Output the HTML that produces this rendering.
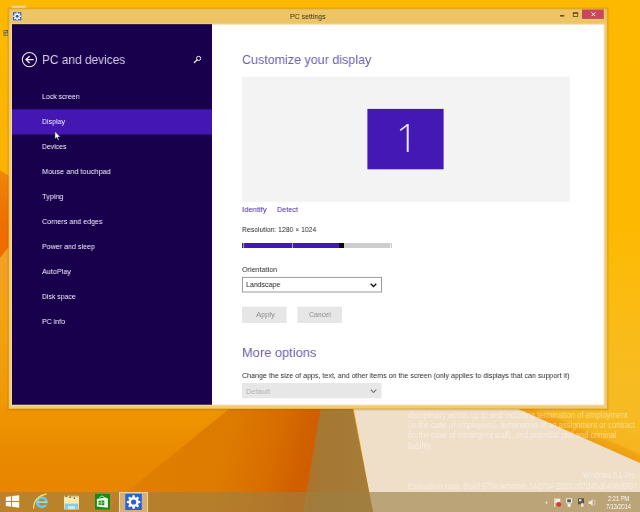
<!DOCTYPE html>
<html>
<head>
<meta charset="utf-8">
<title>PC settings</title>
<style>
html,body{margin:0;padding:0;}
body{width:640px;height:512px;overflow:hidden;position:relative;background:#FDB900;font-family:"Liberation Sans",sans-serif;}
.abs{position:absolute;}
.tx{position:absolute;white-space:nowrap;transform-origin:0 50%;will-change:transform;}
#wall{position:absolute;left:0;top:0;width:640px;height:512px;}
#ui{position:absolute;left:0;top:0;width:640px;height:512px;}
</style>
</head>
<body>
<svg id="wall" viewBox="0 0 640 512">
  <defs>
    <linearGradient id="gbase" x1="0" y1="0" x2="0" y2="1">
      <stop offset="0" stop-color="#FDB900"/>
      <stop offset="0.55" stop-color="#F9AE00"/>
      <stop offset="0.8" stop-color="#F29C04"/>
      <stop offset="1" stop-color="#EE9406"/>
    </linearGradient>
    <linearGradient id="gul" gradientUnits="userSpaceOnUse" x1="0" y1="404" x2="0" y2="500">
      <stop offset="0" stop-color="#F09600"/>
      <stop offset="0.2" stop-color="#EE9200"/>
      <stop offset="0.5" stop-color="#E98A00"/>
      <stop offset="1" stop-color="#E98400"/>
    </linearGradient>
    <linearGradient id="gor" gradientUnits="userSpaceOnUse" x1="110" y1="395" x2="322" y2="445">
      <stop offset="0" stop-color="#E18200"/>
      <stop offset="0.58" stop-color="#DD7A00"/>
      <stop offset="0.8" stop-color="#D76C00"/>
      <stop offset="0.92" stop-color="#D06000"/>
      <stop offset="1" stop-color="#D05C00"/>
    </linearGradient>
    <linearGradient id="gband" gradientUnits="userSpaceOnUse" x1="308" y1="0" x2="368" y2="0">
      <stop offset="0" stop-color="#B07228"/>
      <stop offset="0.2" stop-color="#A57834"/>
      <stop offset="1" stop-color="#A67C38"/>
    </linearGradient>
    <linearGradient id="gyel" gradientUnits="userSpaceOnUse" x1="578" y1="436" x2="590" y2="408">
      <stop offset="0" stop-color="#EE9E12"/>
      <stop offset="0.22" stop-color="#F1A616"/>
      <stop offset="0.3" stop-color="#F5B520"/>
      <stop offset="1" stop-color="#F6BA22"/>
    </linearGradient>
    <linearGradient id="gleft" gradientUnits="userSpaceOnUse" x1="0" y1="245" x2="0" y2="412">
      <stop offset="0" stop-color="#F0A028"/>
      <stop offset="0.4" stop-color="#F2A314"/>
      <stop offset="1" stop-color="#EF9802"/>
    </linearGradient>
    <linearGradient id="gdark" gradientUnits="userSpaceOnUse" x1="0" y1="172" x2="0" y2="255">
      <stop offset="0" stop-color="#F08608"/>
      <stop offset="0.5" stop-color="#EE7202"/>
      <stop offset="1" stop-color="#F06A00"/>
    </linearGradient>
    <linearGradient id="gright" x1="0" y1="0" x2="0" y2="1">
      <stop offset="0" stop-color="#FDB900"/>
      <stop offset="0.45" stop-color="#FDB902"/>
      <stop offset="0.62" stop-color="#FABB14"/>
      <stop offset="0.75" stop-color="#F7BB22"/>
      <stop offset="1" stop-color="#F6BA22"/>
    </linearGradient>
  </defs>
  <rect x="0" y="0" width="640" height="512" fill="url(#gbase)"/>
  <rect x="600" y="0" width="40" height="512" fill="url(#gright)"/>
  <polygon points="0,170 12,178 12,243 0,258" fill="url(#gdark)"/>
  <polygon points="0,258 12,243 12,412 0,412" fill="url(#gleft)"/>
  <rect x="0" y="404" width="330" height="108" fill="url(#gul)"/>
  <polygon points="240,400 330,400 330,512 102,512" fill="url(#gor)"/>
  <polygon points="500,400 640,400 640,470" fill="url(#gyel)"/>
  <polygon points="352,400 498,400 640,463 640,512 373,512" fill="#EFDEC8"/>
  <polygon points="322,400 351,400 373,512 303,512" fill="url(#gband)"/>
</svg>

<!-- window chrome + content shapes -->
<svg id="ui" viewBox="0 0 640 512">
  <!-- thing peeking above window -->
  <rect x="11" y="5.6" width="15.5" height="3" rx="1" fill="#E9C66E"/>
  <rect x="12" y="6.6" width="13" height="0.9" fill="#F8EBC8"/>
  <!-- tiny desktop icon on left -->
  <rect x="3.6" y="30" width="4.4" height="5.6" fill="#5E4C18"/>
  <rect x="4.3" y="30.6" width="1.4" height="1.8" fill="#EADFA8"/>
  <rect x="6.2" y="31.2" width="1.2" height="1.3" fill="#CFC890"/>
  <rect x="4.4" y="33.4" width="1.2" height="1.4" fill="#F0E8C0"/>
  <rect x="6.2" y="33.2" width="1.3" height="1.8" fill="#E6DCA8"/>
  <!-- shadow -->
  <rect x="7" y="7" width="602" height="404" fill="rgba(150,90,0,0.10)"/>
  <rect x="8" y="8" width="600" height="402" fill="rgba(150,90,0,0.14)"/>
  <!-- frame -->
  <rect x="8.5" y="8.5" width="599" height="400.5" fill="#DDAE3A"/>
  <rect x="9.3" y="9.4" width="597.4" height="398.8" fill="#EEC566"/>
  <rect x="9.3" y="23.4" width="597.4" height="1.1" fill="#F3CF8E"/>
  <rect x="9.3" y="24.5" width="2.7" height="383.7" fill="#F1CD7C"/>
  <rect x="10.9" y="24.5" width="1.1" height="381" fill="#F4D592"/>
  <rect x="603.8" y="24.5" width="2.9" height="383.7" fill="#F1CD7C"/>
  <rect x="603.8" y="24.5" width="1.1" height="381" fill="#F4D592"/>
  <rect x="9.3" y="404.7" width="597.4" height="3.5" fill="#F0CB7A"/>
  <rect x="11" y="404.7" width="594" height="1.1" fill="#F5D898"/>
  <!-- title icon -->
  <rect x="13" y="12.2" width="8.3" height="8.1" fill="#2B5FC4"/>
  <polygon points="16.36,13.46 16.46,12.41 17.84,12.41 17.94,13.46 18.57,13.72 19.38,13.05 20.35,14.02 19.68,14.83 19.94,15.46 20.99,15.56 20.99,16.94 19.94,17.04 19.68,17.67 20.35,18.48 19.38,19.45 18.57,18.78 17.94,19.04 17.84,20.09 16.46,20.09 16.36,19.04 15.73,18.78 14.92,19.45 13.95,18.48 14.62,17.67 14.36,17.04 13.31,16.94 13.31,15.56 14.36,15.46 14.62,14.83 13.95,14.02 14.92,13.05 15.73,13.72" fill="#F4F6FC"/>
  <circle cx="17.15" cy="16.25" r="1.5" fill="#2B5FC4"/>
  <!-- min / max / close -->
  <rect x="560" y="15" width="4.2" height="1.6" fill="#6A5112"/>
  <rect x="573.3" y="12.9" width="4.4" height="3.6" fill="none" stroke="#6A5112" stroke-width="0.9"/>
  <rect x="572.9" y="12.3" width="5.2" height="1.4" fill="#6A5112"/>
  <rect x="582" y="9.5" width="21.8" height="9.4" fill="#C9475B"/>
  <path d="M591.6,12.5 L595.2,16.1 M595.2,12.5 L591.6,16.1" stroke="#fff" stroke-width="1" fill="none"/>
  <!-- panes -->
  <rect x="12" y="24.5" width="200" height="380.2" fill="#19004D"/>
  <rect x="212" y="24.5" width="391.8" height="380.2" fill="#FFFFFF"/>
  <rect x="12" y="24.4" width="200" height="0.8" fill="#12002C"/>
  <!-- selection -->
  <rect x="12" y="109.3" width="200" height="25.2" fill="#4417B3"/>
  <!-- back button -->
  <circle cx="29.4" cy="59.6" r="7.1" fill="none" stroke="#EDE8FA" stroke-width="1.05"/>
  <path d="M33.6,59.6 L26,59.6 M29.6,56.2 L26,59.6 L29.6,63" stroke="#F4F0FF" stroke-width="1.3" fill="none"/>
  <!-- search -->
  <circle cx="198.6" cy="58.4" r="2.1" fill="none" stroke="#EDE8FA" stroke-width="1"/>
  <path d="M197,60 L194.4,62.5" stroke="#EDE8FA" stroke-width="1.3" stroke-linecap="round" fill="none"/>
  <!-- preview box -->
  <rect x="242" y="76.6" width="327.8" height="125.2" fill="#F3F3F3"/>
  <rect x="367.4" y="108.9" width="76.2" height="60.4" fill="#4418B4"/>
  <path d="M400.2,130.3 L407.6,124.7" stroke="#EFE6FA" stroke-width="1.6" fill="none"/>
  <path d="M407.7,124 L407.7,151.9" stroke="#F1E8FB" stroke-width="2" fill="none"/>
  <!-- slider -->
  <rect x="242" y="243" width="150" height="5" fill="#CDCDCD"/>
  <rect x="242" y="243" width="97" height="5" fill="#4418B4"/>
  <rect x="339" y="243" width="5" height="5" fill="#0a0a0a"/>
  <rect x="243.3" y="243" width="0.8" height="5" fill="#E8E0FF" opacity="0.8"/>
  <rect x="292" y="243" width="0.8" height="5" fill="#E8E0FF" opacity="0.8"/>
  <rect x="390" y="243" width="0.8" height="5" fill="#fff" opacity="0.8"/>
  <!-- select -->
  <rect x="242.5" y="277.4" width="139" height="14.6" fill="#fff" stroke="#9a9a9a" stroke-width="1"/>
  <path d="M370.7,283.7 L373.5,286.5 L376.3,283.7" stroke="#111" stroke-width="1.3" fill="none"/>
  <!-- buttons -->
  <rect x="242" y="306.7" width="44.6" height="16.3" fill="#E6E6E6"/>
  <rect x="297.4" y="306.7" width="44.6" height="16.3" fill="#E6E6E6"/>
  <!-- disabled select -->
  <rect x="242" y="383" width="139.5" height="15.3" fill="#E7E7E7"/>
  <path d="M370.7,389.7 L373.5,392.5 L376.3,389.7" stroke="#7a7a7a" stroke-width="1.2" fill="none"/>
  <!-- cursor -->
  <path d="M54.9,131.2 L54.9,139 L56.7,137.4 L58,140.2 L59.1,139.7 L57.9,137 L60.3,136.9 Z" fill="#fff" stroke="#1a1030" stroke-width="0.5"/>
</svg>

<div class="tx" style="left:41.70px;top:91.83px;font-size:8.00px;line-height:10.40px;color:#F4F0FF;transform:scaleX(0.8694);">Lock screen</div>
<div class="tx" style="left:41.70px;top:116.83px;font-size:8.00px;line-height:10.40px;color:#F4F0FF;transform:scaleX(0.8768);">Display</div>
<div class="tx" style="left:41.70px;top:141.83px;font-size:8.00px;line-height:10.40px;color:#F4F0FF;transform:scaleX(0.8540);">Devices</div>
<div class="tx" style="left:41.70px;top:166.83px;font-size:8.00px;line-height:10.40px;color:#F4F0FF;transform:scaleX(0.9207);">Mouse and touchpad</div>
<div class="tx" style="left:41.70px;top:191.83px;font-size:8.00px;line-height:10.40px;color:#F4F0FF;transform:scaleX(0.9164);">Typing</div>
<div class="tx" style="left:41.70px;top:216.83px;font-size:8.00px;line-height:10.40px;color:#F4F0FF;transform:scaleX(0.8891);">Corners and edges</div>
<div class="tx" style="left:41.70px;top:241.83px;font-size:8.00px;line-height:10.40px;color:#F4F0FF;transform:scaleX(0.8860);">Power and sleep</div>
<div class="tx" style="left:41.70px;top:266.83px;font-size:8.00px;line-height:10.40px;color:#F4F0FF;transform:scaleX(0.9057);">AutoPlay</div>
<div class="tx" style="left:41.70px;top:291.83px;font-size:8.00px;line-height:10.40px;color:#F4F0FF;transform:scaleX(0.8588);">Disk space</div>
<div class="tx" style="left:41.70px;top:316.83px;font-size:8.00px;line-height:10.40px;color:#F4F0FF;transform:scaleX(0.8805);">PC info</div>
<div class="tx" style="left:41.90px;top:51.25px;font-size:13.20px;line-height:17.16px;color:rgba(240,236,255,0.86);transform:scaleX(0.9010);">PC and devices</div>
<div class="tx" style="left:241.90px;top:51.05px;font-size:13.60px;line-height:17.68px;color:#6A5DB2;transform:scaleX(0.9197);">Customize your display</div>
<div class="tx" style="left:241.90px;top:344.05px;font-size:13.60px;line-height:17.68px;color:#6A5DB2;transform:scaleX(0.9463);">More options</div>
<div class="tx" style="left:241.80px;top:204.83px;font-size:8.00px;line-height:10.40px;color:#4122AA;transform:scaleX(0.9615);">Identify</div>
<div class="tx" style="left:276.70px;top:204.83px;font-size:8.00px;line-height:10.40px;color:#4122AA;transform:scaleX(0.8996);">Detect</div>
<div class="tx" style="left:242.00px;top:225.33px;font-size:8.00px;line-height:10.40px;color:#2a2a2a;transform:scaleX(0.8544);">Resolution: 1280 × 1024</div>
<div class="tx" style="left:242.20px;top:265.33px;font-size:8.00px;line-height:10.40px;color:#2a2a2a;transform:scaleX(0.8995);">Orientation</div>
<div class="tx" style="left:246.00px;top:280.43px;font-size:8.00px;line-height:10.40px;color:#1a1a1a;transform:scaleX(0.8762);">Landscape</div>
<div class="tx" style="left:255.50px;top:310.03px;font-size:8.00px;line-height:10.40px;color:#8e8e8e;transform:scaleX(0.9394);">Apply</div>
<div class="tx" style="left:309.00px;top:310.03px;font-size:8.00px;line-height:10.40px;color:#8e8e8e;transform:scaleX(0.8633);">Cancel</div>
<div class="tx" style="left:242.00px;top:371.13px;font-size:8.00px;line-height:10.40px;color:#2a2a2a;transform:scaleX(0.8862);">Change the size of apps, text, and other items on the screen (only applies to displays that can support it)</div>
<div class="tx" style="left:246.00px;top:386.93px;font-size:8.00px;line-height:10.40px;color:#b0b0b0;transform:scaleX(0.9389);">Default</div>
<div class="tx" style="left:290.30px;top:12.03px;font-size:7.60px;line-height:9.88px;color:#3b2f18;transform:scaleX(0.9186);">PC settings</div>


<div class="tx" style="left:408.30px;top:410.63px;font-size:8.20px;line-height:10.66px;color:rgba(255,255,255,0.5);transform:scaleX(0.9359);">disciplinary action up to and including termination of employment</div>
<div class="tx" style="left:408.30px;top:421.03px;font-size:8.20px;line-height:10.66px;color:rgba(255,255,255,0.5);transform:scaleX(0.9197);">(in the case of employees), termination of an assignment or contract</div>
<div class="tx" style="left:408.30px;top:431.33px;font-size:8.20px;line-height:10.66px;color:rgba(255,255,255,0.5);transform:scaleX(0.9237);">(in the case of contingent staff), and potential civil and criminal</div>
<div class="tx" style="left:408.30px;top:441.63px;font-size:8.20px;line-height:10.66px;color:rgba(255,255,255,0.5);transform:scaleX(0.9323);">liability.</div>
<div class="tx" style="left:583.00px;top:471.13px;font-size:8.20px;line-height:10.66px;color:rgba(255,255,255,0.5);transform:scaleX(0.8470);">Windows 8.1 Pro</div>
<div class="tx" style="left:408.30px;top:482.23px;font-size:8.20px;line-height:10.66px;color:rgba(255,255,255,0.5);transform:scaleX(0.8962);">Evaluation copy. Build 9788.winmain.140704-2023.c07d45d6468d5f07</div>

<svg class="abs" style="left:0;top:0;width:640px;height:512px;" viewBox="0 0 640 512">
  <!-- taskbar -->
  <rect x="0" y="492" width="640" height="20" fill="rgba(154,129,70,0.615)"/>
  <!-- start -->
  <polygon points="5.8,496.9 11,496.2 11,501 5.8,501" fill="#FFFBEA"/>
  <polygon points="11.9,496.1 19.2,495.2 19.2,501 11.9,501" fill="#FFFBEA"/>
  <polygon points="5.8,501.9 11,501.9 11,506.7 5.8,506" fill="#FFFBEA"/>
  <polygon points="11.9,501.9 19.2,501.9 19.2,507.8 11.9,506.8" fill="#FFFBEA"/>
  <!-- IE -->
  <circle cx="41.8" cy="502.3" r="4.6" fill="none" stroke="#6CC8E8" stroke-width="2.8"/>
  <rect x="37.5" y="501.3" width="9.8" height="1.8" fill="#8FDCF0"/>
  <rect x="43.5" y="503.2" width="5" height="1.7" fill="#B8882C"/>
  <path d="M33.6,508.6 C33.2,502 38,495.2 46.6,494" stroke="#F7D864" stroke-width="1.3" fill="none"/>
  <!-- explorer -->
  <rect x="64" y="495.8" width="15" height="13.6" fill="#FBEBB0"/>
  <rect x="64.6" y="503.6" width="13.8" height="5.6" fill="#8CCDE2"/>
  <rect x="68" y="506.2" width="7" height="3" fill="#CFE9EE"/>
  <rect x="64" y="496" width="15" height="1.5" fill="#D9C98A"/>
  <rect x="65.5" y="495.6" width="1.3" height="1.3" fill="#5A5030"/>
  <rect x="69.5" y="496.6" width="1.3" height="1.3" fill="#5A5030"/>
  <rect x="73.8" y="497.6" width="1.3" height="1.3" fill="#5A5030"/>
  <!-- store -->
  <rect x="95" y="493.8" width="15" height="15.7" fill="#188A18"/>
  <polygon points="96.9,498.9 105.6,497.6 107.9,498.4 107.9,507.8 96.9,506.4" fill="#EEFCEE"/>
  <path d="M99.5,498.6 C99.5,495.6 104.2,495.4 104.4,498" stroke="#C9F0C9" stroke-width="0.9" fill="none"/>
  <rect x="98.6" y="500.7" width="2.3" height="4.2" fill="#1A8A1A"/>
  <rect x="101.5" y="500.5" width="2.8" height="4.7" fill="#1A8A1A"/>
  <rect x="98.4" y="502.6" width="6" height="0.6" fill="#E6FAE6"/>
  <!-- settings (active) -->
  <rect x="119" y="492" width="29" height="20" fill="#D3B07A"/>
  <rect x="119" y="492" width="29" height="0.9" fill="#F0D9AE"/>
  <rect x="119" y="492" width="0.9" height="20" fill="#F0D9AE"/>
  <rect x="147.1" y="492" width="0.9" height="20" fill="#F0D9AE"/>
  <rect x="125.3" y="493.8" width="16.5" height="16.2" fill="#2961D2"/>
  <polygon points="132.32,497.17 132.48,495.29 134.72,495.29 134.88,497.17 136.11,497.68 137.55,496.47 139.13,498.05 137.92,499.49 138.43,500.72 140.31,500.88 140.31,503.12 138.43,503.28 137.92,504.51 139.13,505.95 137.55,507.53 136.11,506.32 134.88,506.83 134.72,508.71 132.48,508.71 132.32,506.83 131.09,506.32 129.65,507.53 128.07,505.95 129.28,504.51 128.77,503.28 126.89,503.12 126.89,500.88 128.77,500.72 129.28,499.49 128.07,498.05 129.65,496.47 131.09,497.68" fill="#fff"/>
  <circle cx="133.6" cy="502" r="2.6" fill="#2961D2"/>
  <!-- tray -->
  <path d="M545.2,502.6 L547.2,501.2 L547.2,504 Z" fill="#F4EEDC"/>
  <rect x="554.3" y="498.2" width="1" height="8.6" fill="#F4EEDC"/>
  <rect x="555.3" y="498.6" width="5" height="4.2" fill="#F4EEDC"/>
  <circle cx="558.8" cy="504.4" r="2.4" fill="#DD3535"/>
  <rect x="566.2" y="498.3" width="5.8" height="5" fill="#F4F0E4"/>
  <rect x="567.2" y="499.3" width="3.8" height="3" fill="#56606A"/>
  <rect x="567.6" y="503.6" width="3" height="3.2" fill="#F4F0E4"/>
  <rect x="578" y="498.3" width="6" height="6" fill="#5A5648"/>
  <rect x="579" y="499.3" width="2.4" height="2" fill="#E8E4D4"/>
  <rect x="581" y="503.2" width="2.6" height="3.6" fill="#E8E4D4"/>
  <polygon points="588.6,501.2 590.6,501.2 592.6,499 592.6,506.2 590.6,504 588.6,504" fill="#F0ECDC"/>
  <path d="M594,500 C595.4,501.6 595.4,503.6 594,505.2" stroke="#E6E0CC" stroke-width="0.8" fill="none"/>
</svg>
<div class="tx" style="left:608.00px;top:493.63px;font-size:7.60px;line-height:9.88px;color:#FFFDF4;transform:scaleX(0.7490);">2:21 PM</div>
<div class="tx" style="left:606.40px;top:501.83px;font-size:7.60px;line-height:9.88px;color:#FFFDF4;transform:scaleX(0.7394);">7/13/2014</div>

</body>
</html>
